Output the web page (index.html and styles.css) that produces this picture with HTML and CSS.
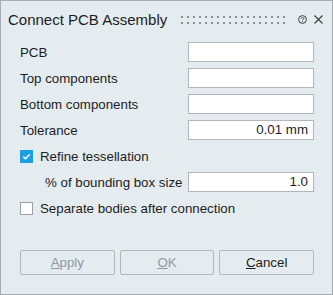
FILE: index.html
```html
<!DOCTYPE html>
<html>
<head>
<meta charset="utf-8">
<link rel="stylesheet" href="styles.css">
</head>
<body>
<div class="dialog">
  <div class="titlebar">
    <span class="title">Connect PCB Assembly</span>
    <svg class="grip" width="106" height="8" viewBox="0 0 106 8">
      <defs>
        <pattern id="dots" width="6" height="6" patternUnits="userSpaceOnUse">
          <rect x="0" y="0" width="2" height="2" fill="#8b9095"/>
        </pattern>
      </defs>
      <rect x="0" y="0" width="106" height="8" fill="url(#dots)"/>
    </svg>
    <svg class="icon help" width="9" height="9" viewBox="0 0 9 9">
      <circle cx="4.5" cy="4.5" r="3.9" fill="none" stroke="#3a3d42" stroke-width="1"/>
      <path d="M3.1 3.6 C3.1 2.3 5.9 2.3 5.9 3.6 C5.9 4.5 4.5 4.5 4.5 5.4" fill="none" stroke="#3a3d42" stroke-width="0.9"/>
      <rect x="4.05" y="6.1" width="0.9" height="0.9" fill="#3a3d42"/>
    </svg>
    <svg class="icon close" width="9" height="9" viewBox="0 0 9 9">
      <path d="M0.5 0.5 L8.5 8.5 M8.5 0.5 L0.5 8.5" stroke="#3a3d42" stroke-width="1.1"/>
    </svg>
  </div>
  <div class="form">
    <div class="row"><span class="label">PCB</span><div class="field"></div></div>
    <div class="row"><span class="label">Top components</span><div class="field"></div></div>
    <div class="row"><span class="label">Bottom components</span><div class="field"></div></div>
    <div class="row"><span class="label">Tolerance</span><div class="field">0.01 mm</div></div>
    <div class="row check-row">
      <span class="box checked">
        <svg width="13" height="13" viewBox="0 0 13 13"><path d="M3.3 6.6 L5.5 8.8 L9.8 4.3" fill="none" stroke="#fff" stroke-width="1.5"/></svg>
      </span>
      <span class="check-label">Refine tessellation</span>
    </div>
    <div class="row"><span class="label sub">% of bounding box size</span><div class="field">1.0</div></div>
    <div class="row check-row">
      <span class="box"></span>
      <span class="check-label">Separate bodies after connection</span>
    </div>
  </div>
  <div class="buttons">
    <button class="btn disabled"><u>A</u>pply</button>
    <button class="btn disabled"><u>O</u>K</button>
    <button class="btn"><u>C</u>ancel</button>
  </div>
</div>
</body>
</html>
```
FILE: styles.css
```css
html, body {
  margin: 0;
  padding: 0;
  background: #e5ecf0;
}
.dialog {
  box-sizing: border-box;
  width: 333px;
  height: 295px;
  border: 1px solid #a7acb1;
  background: #e5ecf0;
  font-family: "Liberation Sans", Arial, sans-serif;
  color: #1c1c24;
  display: flex;
  flex-direction: column;
}
.titlebar {
  height: 36px;
  display: flex;
  align-items: center;
  padding-left: 7px;
}
.title {
  font-size: 15px;
  color: #1c1c24;
  width: 173px;
  white-space: nowrap;
}
.grip {
  display: block;
  margin-top: 1px;
}
.icon {
  display: block;
}
.help {
  margin-left: 11px;
}
.close {
  margin-left: 7px;
}
.form {
  padding: 5px 18px 0 19px;
  display: flex;
  flex-direction: column;
  gap: 6px;
}
.row {
  height: 20px;
  display: flex;
  align-items: center;
  font-size: 13.3px;
}
.label {
  flex: 1;
  white-space: nowrap;
}
.label.sub {
  padding-left: 25px;
}
.field {
  box-sizing: border-box;
  width: 126px;
  height: 20px;
  background: #fff;
  border: 1px solid #b2b6ba;
  text-align: right;
  padding-right: 5px;
  line-height: 18px;
  font-size: 13.3px;
  color: #1c1c24;
}
.box {
  box-sizing: border-box;
  width: 13px;
  height: 13px;
  border: 1px solid #9aa0a6;
  background: #fff;
  display: block;
}
.box.checked {
  border: none;
  background: #1ba1e2;
}
.box svg {
  display: block;
}
.check-label {
  margin-left: 7px;
}
.buttons {
  margin-top: auto;
  padding: 0 18px 19px 19px;
  display: flex;
  gap: 5px;
}
.btn {
  box-sizing: border-box;
  width: 95px;
  height: 25px;
  border: 1px solid #b3b7bb;
  border-radius: 2px;
  background: #e5ecf0;
  font-family: "Liberation Sans", Arial, sans-serif;
  font-size: 13.3px;
  color: #1c1c24;
  padding: 0;
}
.btn.disabled {
  color: #8e98a3;
}
```
